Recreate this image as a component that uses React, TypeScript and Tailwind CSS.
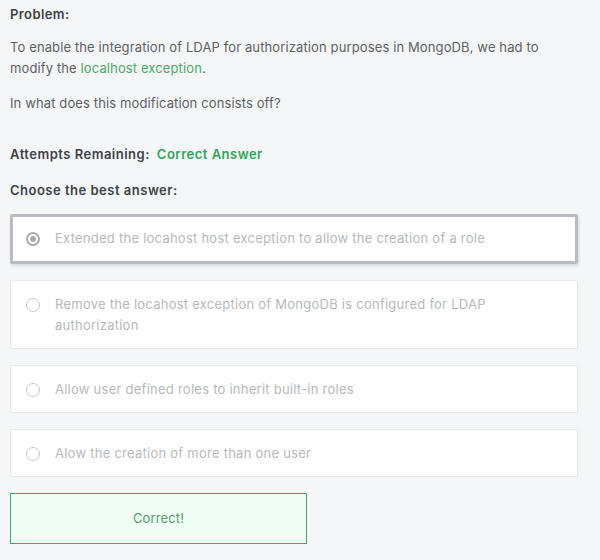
const options = [
  'Extended the locahost host exception to allow the creation of a role',
  'Remove the locahost exception of MongoDB is configured for LDAP authorization',
  'Allow user defined roles to inherit built-in roles',
  'Alow the creation of more than one user',
];

const Radio = ({ checked }: { checked: boolean }) => (
  <span
    className={
      checked
        ? 'mt-[4px] flex h-[14px] w-[14px] shrink-0 items-center justify-center rounded-full border-2 border-[#a9adb2]'
        : 'mt-[4px] h-[14px] w-[14px] shrink-0 rounded-full border border-[#c4c7cb]'
    }
  >
    {checked && <span className="h-[6px] w-[6px] rounded-full bg-[#a9adb2]" />}
  </span>
);

export default function App() {
  return (
    <div
      className="min-h-[560px] w-[600px] bg-[#f5f6f8] px-[10px] pt-[4px] text-[13px] leading-[21px] tracking-[0.12px]"
      style={{ fontFamily: 'Inter, "Noto Sans", sans-serif' }}
    >
      <h2 className="font-semibold tracking-[0.4px] text-[#3d4148]">Problem:</h2>
      <p className="mt-[12px] pr-[30px] text-[#5d6166]">
        To enable the integration of LDAP for authorization purposes in MongoDB, we had to modify
        the <span className="text-[#4fa76a]">localhost exception</span>.
      </p>
      <p className="mt-[14px] text-[#5d6166]">In what does this modification consists off?</p>

      <div className="mt-[30px] flex gap-[7px] font-semibold tracking-[0.5px]">
        <span className="text-[#3d4148]">Attempts Remaining:</span>
        <span className="text-[#2fa55a]">Correct Answer</span>
      </div>
      <h3 className="mt-[15px] font-semibold tracking-[0.5px] text-[#3d4148]">
        Choose the best answer:
      </h3>

      <div className="mt-[13px] flex w-[568px] flex-col gap-[16px]">
        {options.map((text, i) => (
          <div
            key={text}
            className={
              i === 0
                ? 'flex gap-[15px] rounded-[2px] border-[3px] border-[#b8bcc0] bg-white pb-[12px] pt-[11px] pl-[13px] pr-[20px] shadow-[1px_2px_3px_rgba(0,0,0,0.12)]'
                : 'flex gap-[15px] rounded-[2px] border border-[#e6e8eb] bg-white pb-[12px] pt-[13px] pl-[15px] pr-[90px]'
            }
          >
            <Radio checked={i === 0} />
            <span className="tracking-[0.25px] text-[#b6b9bd]">{text}</span>
          </div>
        ))}
        <div className="flex h-[51px] w-[297px] items-center justify-center border border-[#3ea86c] bg-[#effdf4] text-[#579c6e]">
          Correct!
        </div>
      </div>
    </div>
  );
}
